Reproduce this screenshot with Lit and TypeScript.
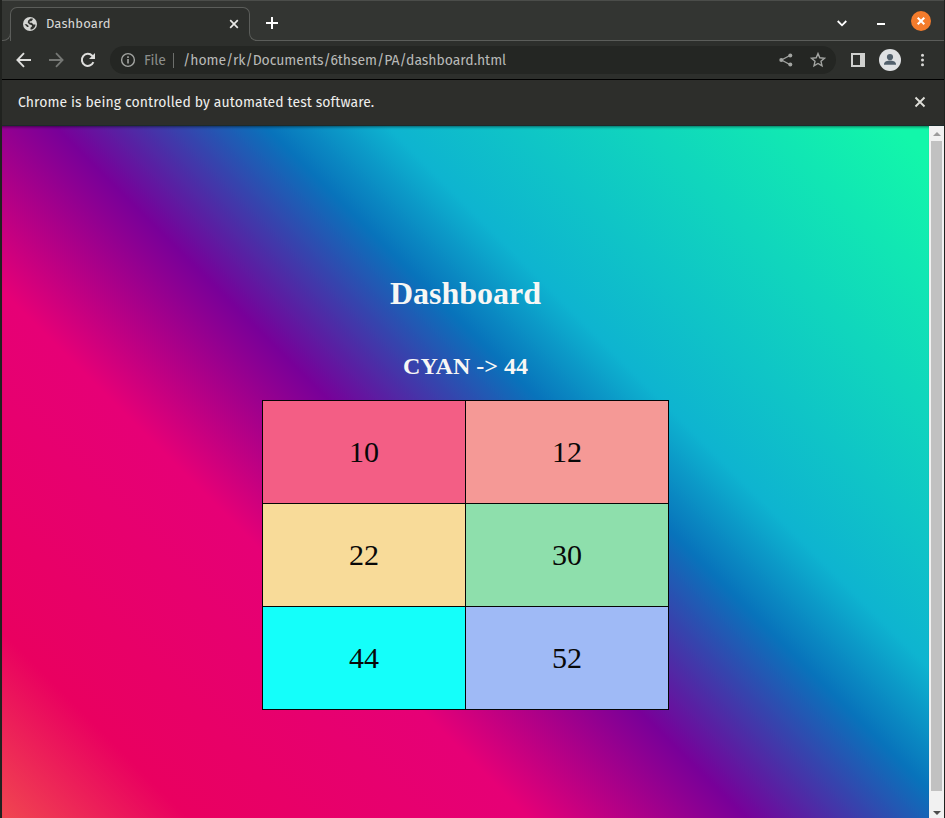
import { LitElement, html, css } from "lit";
import { customElement } from "lit/decorators.js";

@customElement("browser-chrome")
class BrowserChrome extends LitElement {
  static styles = css`
    :host { display: block; font-family: "Fira Sans", "Noto Sans", sans-serif; color: #e9e9e7; }
    svg { display: block; flex: none; }
    .tabs { height: 41px; box-sizing: border-box; border-top: 1px solid #4b4d4a; background: #333532; display: flex; align-items: stretch; }
    .foot { width: 9px; flex: none; margin-top: 14px; background: #2d2f2c; display: flex; }
    .foot i { flex: 1; background: #333532; border-bottom: 1px solid #5b5d5a; }
    .foot.l i { border-right: 1px solid #5b5d5a; border-bottom-right-radius: 8px; }
    .foot.r { margin-left: -1px; }
    .foot.r i { border-left: 1px solid #5b5d5a; border-bottom-left-radius: 8px; }
    .tab { width: 240px; margin: 6px 0 0 -1px; box-sizing: border-box; border: 1px solid #5b5d5a; border-bottom: 0; border-radius: 7px 7px 0 0; background: #2d2f2c; display: flex; align-items: center; padding: 0 10px 2px 12px; font-size: 13px; }
    .tab .name { margin-left: 9px; flex: 1; letter-spacing: 0.12px; color: #d8d8d6; line-height: 18px; }
    .rest { flex: 1; display: flex; align-items: center; border-bottom: 1px solid #5b5d5a; padding: 5px 13px 0 8px; }
    .rest .gap { flex: 1; }
    .chev { margin-right: 30px; }
    .min { width: 8px; height: 2px; background: #fff; margin: 1px 31px 0 0; }
    .close { margin-top: -5px; margin-left: -5px; }
    .tools { height: 38px; background: #2d2f2c; display: flex; align-items: center; padding-left: 14px; }
    .tools .fwd { margin-left: 16px; }
    .tools .rel { margin-left: 16px; }
    .omni { margin-left: 14px; width: 726px; height: 28px; border-radius: 14px; background: #242623; display: flex; align-items: center; font-size: 14px; box-sizing: border-box; padding: 0 9px 0 10px; }
    .file { margin-left: 8px; color: #8c8e8b; letter-spacing: 0; }
    .bar { width: 1px; height: 15px; background: #6d6f6c; margin: 0 9px 0 7px; }
    .url { flex: 1; color: #b9bab8; white-space: nowrap; letter-spacing: -0.04px; }
    .star { margin-left: 16px; }
    .panel { margin-left: 14px; }
    .avatar { margin-left: 13px; }
    .dots { margin-left: 13px; }
    .info { height: 46px; box-sizing: border-box; border-top: 1px solid #000; background: #2d2e2b; display: flex; align-items: center; justify-content: space-between; padding: 0 18px 1px 16px; font-size: 14px; color: #efefed; }
    .info .msg { letter-spacing: 0.08px; }
  `;
  render() {
    return html`
      <div class="tabs">
        <div class="foot l"><i></i></div>
        <div class="tab">
          <svg width="14" height="14" viewBox="0 0 14 14"><circle cx="7" cy="7" r="7" fill="#d5d6d4" /><path d="M7.500 1.500h2.200v1.300L8.300 4.300H6.700v1.500h2.200l1.400 1.700h2.200c0 2.800-2.200 5-5 5.100v-1.800l1.400-1.300V8.200L6.200 7.200 4.700 5.400l.5-1.900z" fill="#30322f" /><path d="M1.500 7.200h2.300l1.700 1.500v1.200H4.200z" fill="#30322f" /></svg>
          <span class="name">Dashboard</span>
          <svg width="10" height="10" viewBox="0 0 10 10"><path d="M1.200 1.200l7.600 7.600M8.800 1.200L1.200 8.800" stroke="#e8e8e6" stroke-width="1.7" /></svg>
        </div>
        <div class="foot r"><i></i></div>
        <div class="rest">
          <svg width="12" height="12" viewBox="0 0 12 12"><path d="M6 0v12M0 6h12" stroke="#fff" stroke-width="2" /></svg>
          <span class="gap"></span>
          <svg class="chev" width="10" height="7" viewBox="0 0 10 7"><path d="M.7 1L5 5.300 9.300 1" fill="none" stroke="#fff" stroke-width="1.8" /></svg>
          <span class="min"></span>
          <svg class="close" width="20" height="20" viewBox="0 0 20 20"><circle cx="10" cy="10" r="10" fill="#f47c2c" /><path d="M6.700 6.700l6.600 6.600M13.300 6.700l-6.600 6.600" stroke="#fff" stroke-width="2" /></svg>
        </div>
      </div>
      <div class="tools">
        <svg width="16" height="16" viewBox="0 0 16 16"><path d="M8 1.200L1.400 8 8 14.800M1.400 8H15" fill="none" stroke="#dededc" stroke-width="1.9" /></svg>
        <svg class="fwd" width="16" height="16" viewBox="0 0 16 16"><path d="M8 1.200L14.600 8 8 14.800M14.600 8H1" fill="none" stroke="#757774" stroke-width="1.8" /></svg>
        <svg class="rel" width="16" height="16" viewBox="0 0 16 16"><path d="M13.400 10.200A6 6 0 1 1 12.200 3.700L14 5.500" fill="none" stroke="#dededc" stroke-width="2" /><path d="M15 1v6H9z" fill="#dededc" /></svg>
        <div class="omni">
          <svg width="16" height="16" viewBox="0 0 16 16"><circle cx="8" cy="8" r="6.4" fill="none" stroke="#a3a5a2" stroke-width="1.4" /><path d="M8 7v4.500M8 4.300v1.600" stroke="#a3a5a2" stroke-width="1.6" /></svg>
          <span class="file">File</span><span class="bar"></span>
          <span class="url">/home/rk/Documents/6thsem/PA/dashboard.html</span>
          <svg width="14" height="14" viewBox="0 0 14 14"><path d="M11.300 2.200L2.500 7l8.800 4.800" fill="none" stroke="#a3a5a2" stroke-width="1.3" /><circle cx="11.3" cy="2.4" r="2" fill="#a3a5a2" /><circle cx="2.3" cy="7" r="2" fill="#a3a5a2" /><circle cx="11.3" cy="11.6" r="2" fill="#a3a5a2" /></svg>
          <svg class="star" width="18" height="18" viewBox="0 0 18 18"><path d="M9 2.600l1.800 4.200 4.700.4-3.500 3.100 1 4.600-4-2.400-4 2.400 1-4.600-3.500-3.100 4.700-.4z" fill="none" stroke="#a3a5a2" stroke-width="1.4" /></svg>
        </div>
        <svg class="panel" width="16" height="16" viewBox="0 0 16 16"><path d="M2 2h12v12H2z" fill="none" stroke="#cfd0ce" stroke-width="2" /><path d="M10 2h4v12h-4z" fill="#cfd0ce" /></svg>
        <svg class="avatar" width="22" height="22" viewBox="0 0 22 22"><circle cx="11" cy="11" r="11" fill="#dfe1e3" /><circle cx="11" cy="8" r="3.1" fill="#52606c" /><path d="M5 15.800v-.9c0-2.500 3.600-3.500 6-3.500s6 1 6 3.500v.9z" fill="#52606c" /></svg>
        <svg class="dots" width="16" height="16" viewBox="0 0 16 16"><circle cx="8.5" cy="3.2" r="1.5" fill="#d8d8d6" /><circle cx="8.5" cy="8" r="1.5" fill="#d8d8d6" /><circle cx="8.5" cy="12.8" r="1.5" fill="#d8d8d6" /></svg>
      </div>
      <div class="info">
        <span class="msg">Chrome is being controlled by automated test software.</span>
        <svg width="12" height="12" viewBox="0 0 12 12"><path d="M1.500 1.500l9 9M10.500 1.500l-9 9" stroke="#deded9" stroke-width="1.9" /></svg>
      </div>
    `;
  }
}

@customElement("dashboard-page")
class DashboardPage extends LitElement {
  static styles = css`
    :host { display: flex; min-height: 0; font-family: "Liberation Serif", serif; border-top: 1px solid #1c2a2b; }
    .page { flex: 1; padding-top: 149px; text-align: center; color: #f7f7f5; display: flex; flex-direction: column; align-items: center;
      background: linear-gradient(45deg, #f04650 0%, #e90060 11.5%, #e60076 32.5%, #780099 46%, #0873bb 59%, #0eb4d0 66.6%, #12f7aa 98%); box-shadow: inset 0 3px 3px -2px rgba(0,0,0,.5); }
    h1 { margin: 0; font-size: 32px; line-height: 37px; }
    h2 { margin: 40px 0 20px; font-size: 24px; line-height: 28px; }
    .grid { display: grid; grid-template-columns: 202px 202px; grid-auto-rows: 102px; gap: 1px; padding: 1px; background: #050505; color: #080808; font-size: 30px; }
    .cell { display: flex; align-items: center; justify-content: center; }
    .red { background: #f35e85; } .salmon { background: #f59996; } .sand { background: #f8db99; }
    .green { background: #8edfac; } .cyan { background: #14fffa; } .blue { background: #9fbaf6; }
    .scroll { width: 15px; background: #f1f1f1; display: flex; flex-direction: column; align-items: center; }
    .up { margin: 6px 0 5px; } .down { margin-top: 20px; }
    .thumb { width: 11px; height: 650px; background: #c1c1c1; }
    svg { display: block; flex: none; }
  `;
  cells = [["10", "red"], ["12", "salmon"], ["22", "sand"], ["30", "green"], ["44", "cyan"], ["52", "blue"]];
  render() {
    return html`
      <div class="page">
        <h1>Dashboard</h1>
        <h2>CYAN -&gt; 44</h2>
        <div class="grid">${this.cells.map(([n, c]) => html`<div class="cell ${c}">${n}</div>`)}</div>
      </div>
      <div class="scroll">
        <svg class="up" width="8" height="4" viewBox="0 0 8 4"><path d="M0 4l4-4 4 4z" fill="#9c9c9c" /></svg>
        <div class="thumb"></div>
        <svg class="down" width="8" height="4" viewBox="0 0 8 4"><path d="M0 0l4 4 4-4z" fill="#4d4d4d" /></svg>
      </div>
    `;
  }
}

@customElement("app-root")
class AppRoot extends LitElement {
  static styles = css`
    :host { display: flex; flex-direction: column; height: 818px; box-sizing: border-box; padding: 0 1px 0 2px; background: #20221f; overflow: hidden; }
    dashboard-page { flex: 1; }
  `;
  render() {
    return html`<browser-chrome></browser-chrome><dashboard-page></dashboard-page>`;
  }
}
